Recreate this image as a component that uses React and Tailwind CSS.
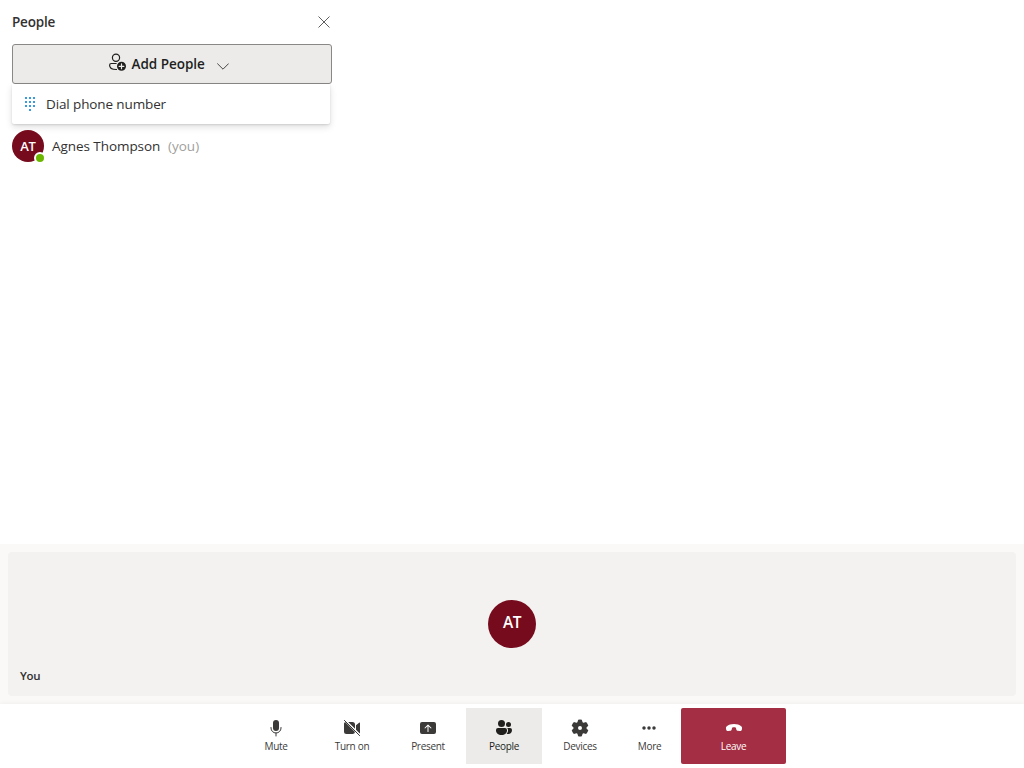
import React from 'react';

const svgProps = { viewBox: '0 0 20 20', width: 20, height: 20, fill: 'currentColor' };

const MicIcon = () => (
  <svg {...svgProps}>
    <rect x="7" y="2" width="6" height="11" rx="3" />
    <path d="M5 9.5v.5a5 5 0 0 0 10 0v-.5M10 15v3" fill="none" stroke="currentColor" strokeLinecap="round" />
  </svg>
);

const VideoOffIcon = () => (
  <svg {...svgProps}>
    <path d="M2 5.5v8A2.500 2.500 0 0 0 4.500 16h6A2.500 2.500 0 0 0 13 13.900L3.100 4A2.500 2.500 0 0 0 2 5.500z" />
    <path d="M6.200 4h4.300A2.500 2.500 0 0 1 13 6.500v4.300zM14 7.300l3.100-2.600a.55.55 0 0 1 .9.4v9.800l-.2.500L14 11.700z" />
    <path d="M2.400 2.400l15.200 15.200" fill="none" stroke="currentColor" strokeLinecap="round" />
  </svg>
);

const PresentIcon = () => (
  <svg {...svgProps}>
    <path fillRule="evenodd" d="M4 4h12a2 2 0 0 1 2 2v8a2 2 0 0 1-2 2H4a2 2 0 0 1-2-2V6a2 2 0 0 1 2-2zm5.650 2.650-3 3a.5.5 0 0 0 .7.7L9.500 8.200v5.300a.5.5 0 0 0 1 0V8.200l2.150 2.150a.5.5 0 0 0 .7-.7l-3-3a.5.5 0 0 0-.7 0z" />
  </svg>
);

const PeopleIcon = () => (
  <svg {...svgProps}>
    <circle cx="7.500" cy="5.500" r="3.500" />
    <circle cx="14.500" cy="6.500" r="2.500" />
    <path d="M4 10h7a2 2 0 0 1 2 2v.5C13 15.200 10.800 17 7.500 17S2 15.200 2 12.500V12a2 2 0 0 1 2-2z" />
    <path d="M13.200 10H16a2 2 0 0 1 2 2c0 2.600-1.600 4-3.600 4-.7 0-1.300-.1-1.800-.3.900-.9 1.400-2 1.400-3.200V12c0-.8-.3-1.500-.8-2z" />
  </svg>
);

const GearIcon = () => (
  <svg {...svgProps}>
    <path fillRule="evenodd" d="M8.200 1.800Q10 1.300 11.800 1.800L12.500 4.100Q12.800 4.800 13.600 4.700L16.100 4.100Q17.700 5.800 18.300 7.800L16.700 9.300Q16.200 10 16.700 10.700L18.300 12.200Q17.700 14.200 16.100 15.900L13.600 15.300Q12.800 15.200 12.500 15.900L11.800 18.200Q10 18.700 8.200 18.200L7.500 15.900Q7.200 15.200 6.400 15.300L3.900 15.900Q2.300 14.200 1.700 12.200L3.300 10.700Q3.800 10 3.300 9.300L1.700 7.800Q2.300 5.800 3.900 4.100L6.400 4.700Q7.200 4.800 7.500 4.100ZM10 8a2 2 0 1 0 0 4 2 2 0 0 0 0-4z" />
  </svg>
);

const MoreIcon = () => (
  <svg {...svgProps} className="-ml-px">
    <circle cx="5" cy="10" r="1.750" />
    <circle cx="10" cy="10" r="1.750" />
    <circle cx="15" cy="10" r="1.750" />
  </svg>
);

const EndCallIcon = () => (
  <svg {...svgProps}>
    <path d="M18 10.700l-.2 1c-.2.900-1 1.400-2 1.300l-1.900-.2c-.8-.1-1.400-.6-1.600-1.400l-.4-1.700c-1.200-.5-2.600-.5-3.800 0l-.4 1.700c-.2.800-.8 1.300-1.600 1.400l-1.900.2c-1 .1-1.800-.4-2-1.300l-.2-1c-.2-1 .1-1.800.8-2.400C4.600 6.800 7 6 10 6s5.400.8 7.200 2.300c.7.6 1 1.400.8 2.400z" />
  </svg>
);

const AddPersonIcon = () => (
  <svg {...svgProps} className="mb-1 shrink-0">
    <circle cx="8" cy="5.800" r="3.600" fill="none" stroke="currentColor" strokeWidth="1.200" />
    <path d="M8.600 11.500H3.300A1.700 1.700 0 0 0 1.600 13.200c0 2.800 2.700 4.300 6.600 4.300h.8" fill="none" stroke="currentColor" strokeWidth="1.200" />
    <circle cx="13.500" cy="14.300" r="4.500" />
    <path d="M13.500 11.900v4.800M11.100 14.300h4.800" stroke="#edebe9" strokeLinecap="round" strokeWidth="1.200" />
  </svg>
);

const DialpadIcon = () => (
  <svg viewBox="0 0 12 16" width="12" height="16" fill="#3b9bd9" shapeRendering="crispEdges">
    {[1, 5, 9].map((y) => [1, 5, 9].map((x) => <rect key={`${x}-${y}`} x={x} y={y} width="2" height="2" />))}
    <rect x="5" y="13" width="2" height="2" />
  </svg>
);

const barItems = [
  { label: 'Mute', Icon: MicIcon, style: 'w-[76px] text-[#3b3a39]' },
  { label: 'Turn on', Icon: VideoOffIcon, style: 'w-[76px] text-[#3b3a39]' },
  { label: 'Present', Icon: PresentIcon, style: 'w-[76px] text-[#3b3a39]' },
  { label: 'People', Icon: PeopleIcon, style: 'w-[76px] bg-[#edebe9] text-[#201f1e]' },
  { label: 'Devices', Icon: GearIcon, style: 'w-[76px] text-[#3b3a39]' },
  { label: 'More', Icon: MoreIcon, style: 'w-[63px] text-[#3b3a39]' },
  { label: 'Leave', Icon: EndCallIcon, style: 'w-[105px] rounded-xs bg-[#a42e43] text-white' },
];

function PeoplePane() {
  return (
    <aside className="w-[344px] px-3 text-[13.500px] text-[#323130]">
      <header className="flex h-11 items-center justify-between">
        <h2 className="font-semibold tracking-[-0.2px]">People</h2>
        <button aria-label="Close" className="mr-0.5">
          <svg width="12" height="12" viewBox="0 0 12 12" fill="none" stroke="#605e5c">
            <path d="M.5.500l11 11M11.500.500l-11 11" />
          </svg>
        </button>
      </header>
      <button className="flex h-10 w-full items-center justify-center rounded-[3px] border border-[#8a8886] bg-[#edebe9] pr-2 font-semibold text-[#201f1e]">
        <AddPersonIcon />
        <span className="ml-1 w-[74px] whitespace-nowrap pt-px text-left tracking-[-0.02px]">Add People</span>
        <svg className="mt-1 ml-[11px]" width="12" height="7" viewBox="0 0 12 7" fill="none" stroke="#484644">
          <path d="M.3.500L6 6.200 11.700.500" />
        </svg>
      </button>
      <div className="flex h-10 w-[318px] items-center rounded-b-xs bg-white pl-3 shadow-[0_3px_7px_0_rgba(0,0,0,0.13),0_1px_2px_0_rgba(0,0,0,0.11)]">
        <DialpadIcon />
        <span className="ml-2.5 pt-px tracking-[-0.12px]">Dial phone number</span>
      </div>
      <div className="mt-1.5 flex h-8 items-center">
        <div className="relative flex size-8 items-center justify-center rounded-full bg-[#750b1c] text-[13px] font-semibold text-white">
          <span className="pt-px tracking-[-0.2px]">AT</span>
          <span className="absolute -right-0.5 -bottom-0.5 size-3 rounded-full border-2 border-white bg-[#6bb700]" />
        </div>
        <span className="ml-2 w-[108px] whitespace-nowrap pt-px tracking-[-0.06px]">Agnes Thompson</span>
        <span className="ml-2 pt-px text-[#a19f9d]">(you)</span>
      </div>
    </aside>
  );
}

export default function App() {
  return (
    <div className="flex h-screen flex-col overflow-hidden bg-white font-['Open_Sans','Noto_Sans',sans-serif]">
      <main className="h-[544px] shrink-0">
        <PeoplePane />
      </main>
      <section className="h-40 shrink-0 bg-[#faf9f8] p-2">
        <div className="flex h-36 flex-col items-center rounded bg-[#f3f2f1] pt-12">
          <div className="flex size-12 items-center justify-center rounded-full bg-[#750b1c] pb-[3px] text-[15.500px] font-semibold text-white">
            <span className="tracking-[-0.4px]">AT</span>
          </div>
          <span className="mt-5 self-start pl-3 text-[11.500px] leading-4 font-semibold tracking-[-0.3px] text-[#323130]">You</span>
        </div>
      </section>
      <nav className="z-10 flex h-16 shrink-0 justify-center bg-white pt-1 pb-1 shadow-[0_0_5px_rgba(0,0,0,0.06)]">
        {barItems.map(({ label, Icon, style }) => (
          <button key={label} className={`flex h-14 flex-col items-center pt-2.5 ${style}`}>
            <Icon />
            <span className="text-[10px] leading-4 tracking-[-0.3px]">{label}</span>
          </button>
        ))}
      </nav>
    </div>
  );
}
